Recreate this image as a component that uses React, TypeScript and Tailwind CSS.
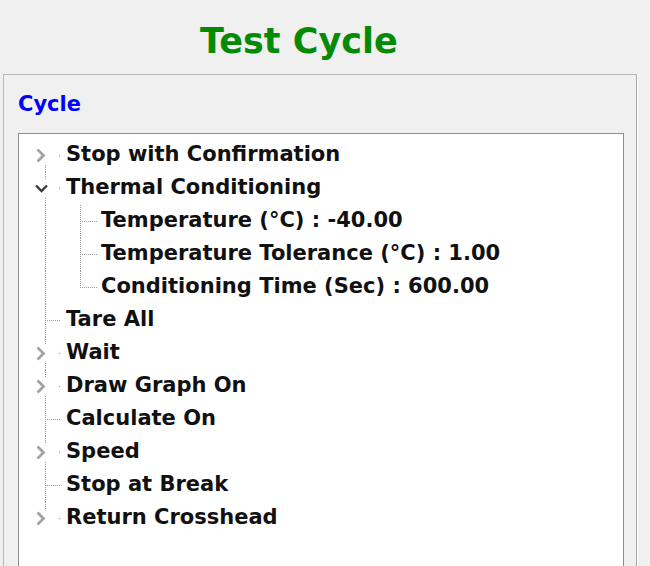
import React from "react";

type Node = {
  label: string;
  kind: "collapsed" | "expanded" | "leaf";
  children?: string[];
};

const nodes: Node[] = [
  { label: "Stop with Confirmation", kind: "collapsed" },
  {
    label: "Thermal Conditioning",
    kind: "expanded",
    children: [
      "Temperature (°C) : -40.00",
      "Temperature Tolerance (°C) : 1.00",
      "Conditioning Time (Sec) : 600.00",
    ],
  },
  { label: "Tare All", kind: "leaf" },
  { label: "Wait", kind: "collapsed" },
  { label: "Draw Graph On", kind: "collapsed" },
  { label: "Calculate On", kind: "leaf" },
  { label: "Speed", kind: "collapsed" },
  { label: "Stop at Break", kind: "leaf" },
  { label: "Return Crosshead", kind: "collapsed" },
];

const H = 33;
const DOT = "#9a9a9a";
const DASH = "1 1";

function TopGutter({
  kind,
  first,
  last,
}: {
  kind: Node["kind"];
  first: boolean;
  last: boolean;
}) {
  const mid = 16.5;
  const x = 26.5;
  const hasBtn = kind !== "leaf";
  return (
    <svg width={47} height={H} className="shrink-0 block">
      {hasBtn ? (
        <>
          {!first && (
            <line x1={x} y1={0} x2={x} y2={8} stroke={DOT} strokeDasharray={DASH} />
          )}
          {!last && (
            <line x1={x} y1={26} x2={x} y2={H} stroke={DOT} strokeDasharray={DASH} />
          )}
          <rect x={40} y={16} width={1} height={1} fill={DOT} />
        </>
      ) : (
        <>
          <line
            x1={x}
            y1={first ? 16 : 0}
            x2={x}
            y2={last ? 17 : H}
            stroke={DOT}
            strokeDasharray={DASH}
          />
          <line x1={28} y1={mid} x2={42} y2={mid} stroke={DOT} strokeDasharray={DASH} />
        </>
      )}
      {kind === "collapsed" && (
        <polyline
          points={`${18.5},${mid - 6} ${24.5},${mid} ${18.5},${mid + 6}`}
          fill="none"
          stroke="#a2a2a2"
          strokeWidth={2.8}
        />
      )}
      {kind === "expanded" && (
        <polyline
          points={`${17},${mid - 3} ${22.5},${mid + 2.5} ${28},${mid - 3}`}
          fill="none"
          stroke="#3c3c3c"
          strokeWidth={2.4}
        />
      )}
    </svg>
  );
}

function ChildGutter({ last }: { last: boolean }) {
  const mid = 16.5;
  return (
    <svg width={82} height={H} className="shrink-0 block">
      <line x1={26.5} y1={0} x2={26.5} y2={H} stroke={DOT} strokeDasharray={DASH} />
      <line
        x1={61.5}
        y1={0}
        x2={61.5}
        y2={last ? 17 : H}
        stroke={DOT}
        strokeDasharray={DASH}
      />
      <line x1={63} y1={mid} x2={78} y2={mid} stroke={DOT} strokeDasharray={DASH} />
    </svg>
  );
}

export default function App() {
  return (
    <div
      className="w-[650px] h-[566px] bg-[#f0f0f0] overflow-hidden"
      style={{ fontFamily: 'Tahoma, "DejaVu Sans", Verdana, sans-serif' }}
    >
      <div className="h-[74px] pl-[200px] pt-[20px]">
        <div className="text-[35px] leading-[42px] font-bold text-[#058a05]">
          Test Cycle
        </div>
      </div>
      <div className="ml-[3px] w-[634px] h-[500px] border border-[#b9b9b9] border-r-[#a8a8a8] shadow-[1px_0_0_#ffffff]">
        <div className="pl-[14px] pt-[16px] h-[58px] text-[21px] leading-[26px] font-bold text-[#0000ff]">
          Cycle
        </div>
        <div className="ml-[14px] w-[606px] h-[440px] bg-white border border-[#8e8e8e] pt-[4.5px]">
          {nodes.map((n, i) => (
            <React.Fragment key={n.label}>
              <div className="flex items-center h-[33px]">
                <TopGutter kind={n.kind} first={i === 0} last={i === nodes.length - 1} />
                <span className="text-[21px] font-bold text-[#111] whitespace-nowrap">
                  {n.label}
                </span>
              </div>
              {n.children?.map((c, j) => (
                <div key={c} className="flex items-center h-[33px]">
                  <ChildGutter last={j === n.children!.length - 1} />
                  <span className="text-[21px] font-bold text-[#111] whitespace-nowrap">
                    {c}
                  </span>
                </div>
              ))}
            </React.Fragment>
          ))}
        </div>
      </div>
    </div>
  );
}
